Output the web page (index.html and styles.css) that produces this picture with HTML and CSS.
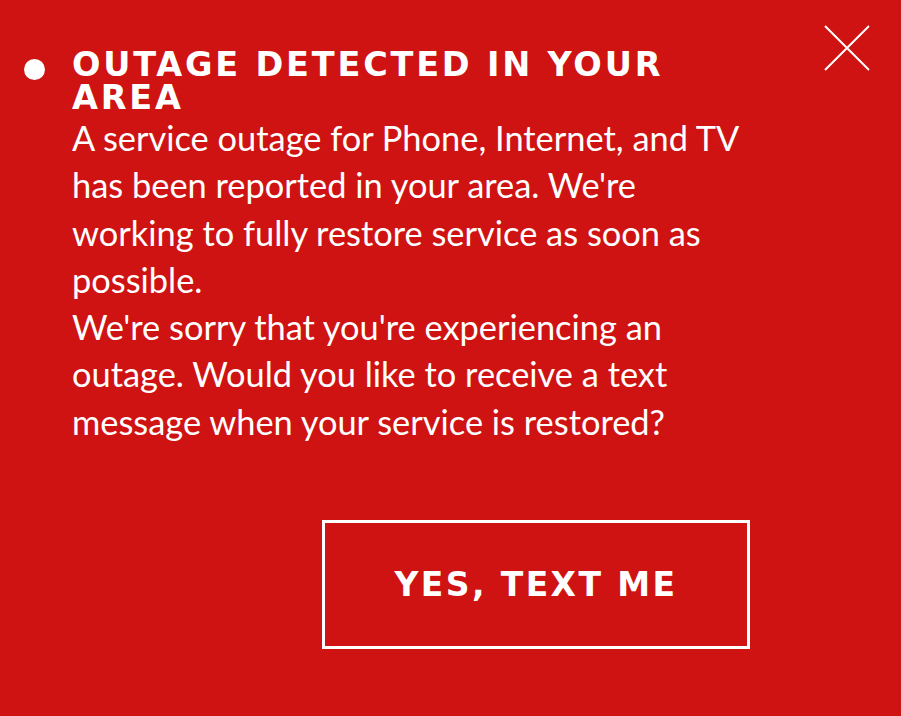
FILE: index.html
```html
<!DOCTYPE html>
<html lang="en">
<head>
<meta charset="utf-8">
<title>Outage</title>
<link rel="stylesheet" href="styles.css">
</head>
<body>
<div class="panel">
  <button class="close" aria-label="Close">
    <svg width="48" height="48" viewBox="0 0 48 48"><path d="M2 2 L46 46 M46 2 L2 46" stroke="#fff" stroke-width="2" fill="none"/></svg>
  </button>
  <div class="row">
    <span class="dot"></span>
    <div class="content">
      <h1 class="title">OUTAGE DETECTED IN YOUR AREA</h1>
      <p class="text">A service outage for Phone, Internet, and TV has been reported in your area. We're working to fully restore service as soon as possible.</p>
      <p class="text">We're sorry that you're experiencing an outage. Would you like to receive a text message when your service is restored?</p>
      <div class="actions"><button class="cta">YES, TEXT ME</button></div>
    </div>
  </div>
</div>
</body>
</html>
```
FILE: styles.css
```css
html, body { margin: 0; padding: 0; }
body { background: #cf1212; width: 901px; height: 716px; overflow: hidden; }
.panel { position: relative; width: 901px; height: 716px; box-sizing: border-box; padding: 48px 0 0 24px; }
.close { position: absolute; top: 24px; right: 30px; background: none; border: 0; padding: 0; width: 48px; height: 48px; }
.close svg { display: block; }
.row { display: flex; align-items: flex-start; }
.dot { width: 21px; height: 21px; border-radius: 50%; background: #fff; margin-top: 11px; flex: none; }
.content { margin-left: 27px; width: 680px; }
.title { margin: 0; font-family: "DejaVu Sans", sans-serif; font-weight: bold; font-size: 33.5px; line-height: 33px; letter-spacing: 2.8px; color: #fff; }
.text { margin: 0; font-family: Lato, sans-serif; font-size: 34.4px; line-height: 47.3px; color: #fff; }
.actions { display: flex; justify-content: flex-end; margin-top: 75px; margin-right: 2px; }
.cta { width: 428px; height: 129px; box-sizing: border-box; border: 3px solid #fff; background: transparent; color: #fff; font-family: "DejaVu Sans", sans-serif; font-weight: bold; font-size: 33px; letter-spacing: 2.4px; padding: 0; }
```
